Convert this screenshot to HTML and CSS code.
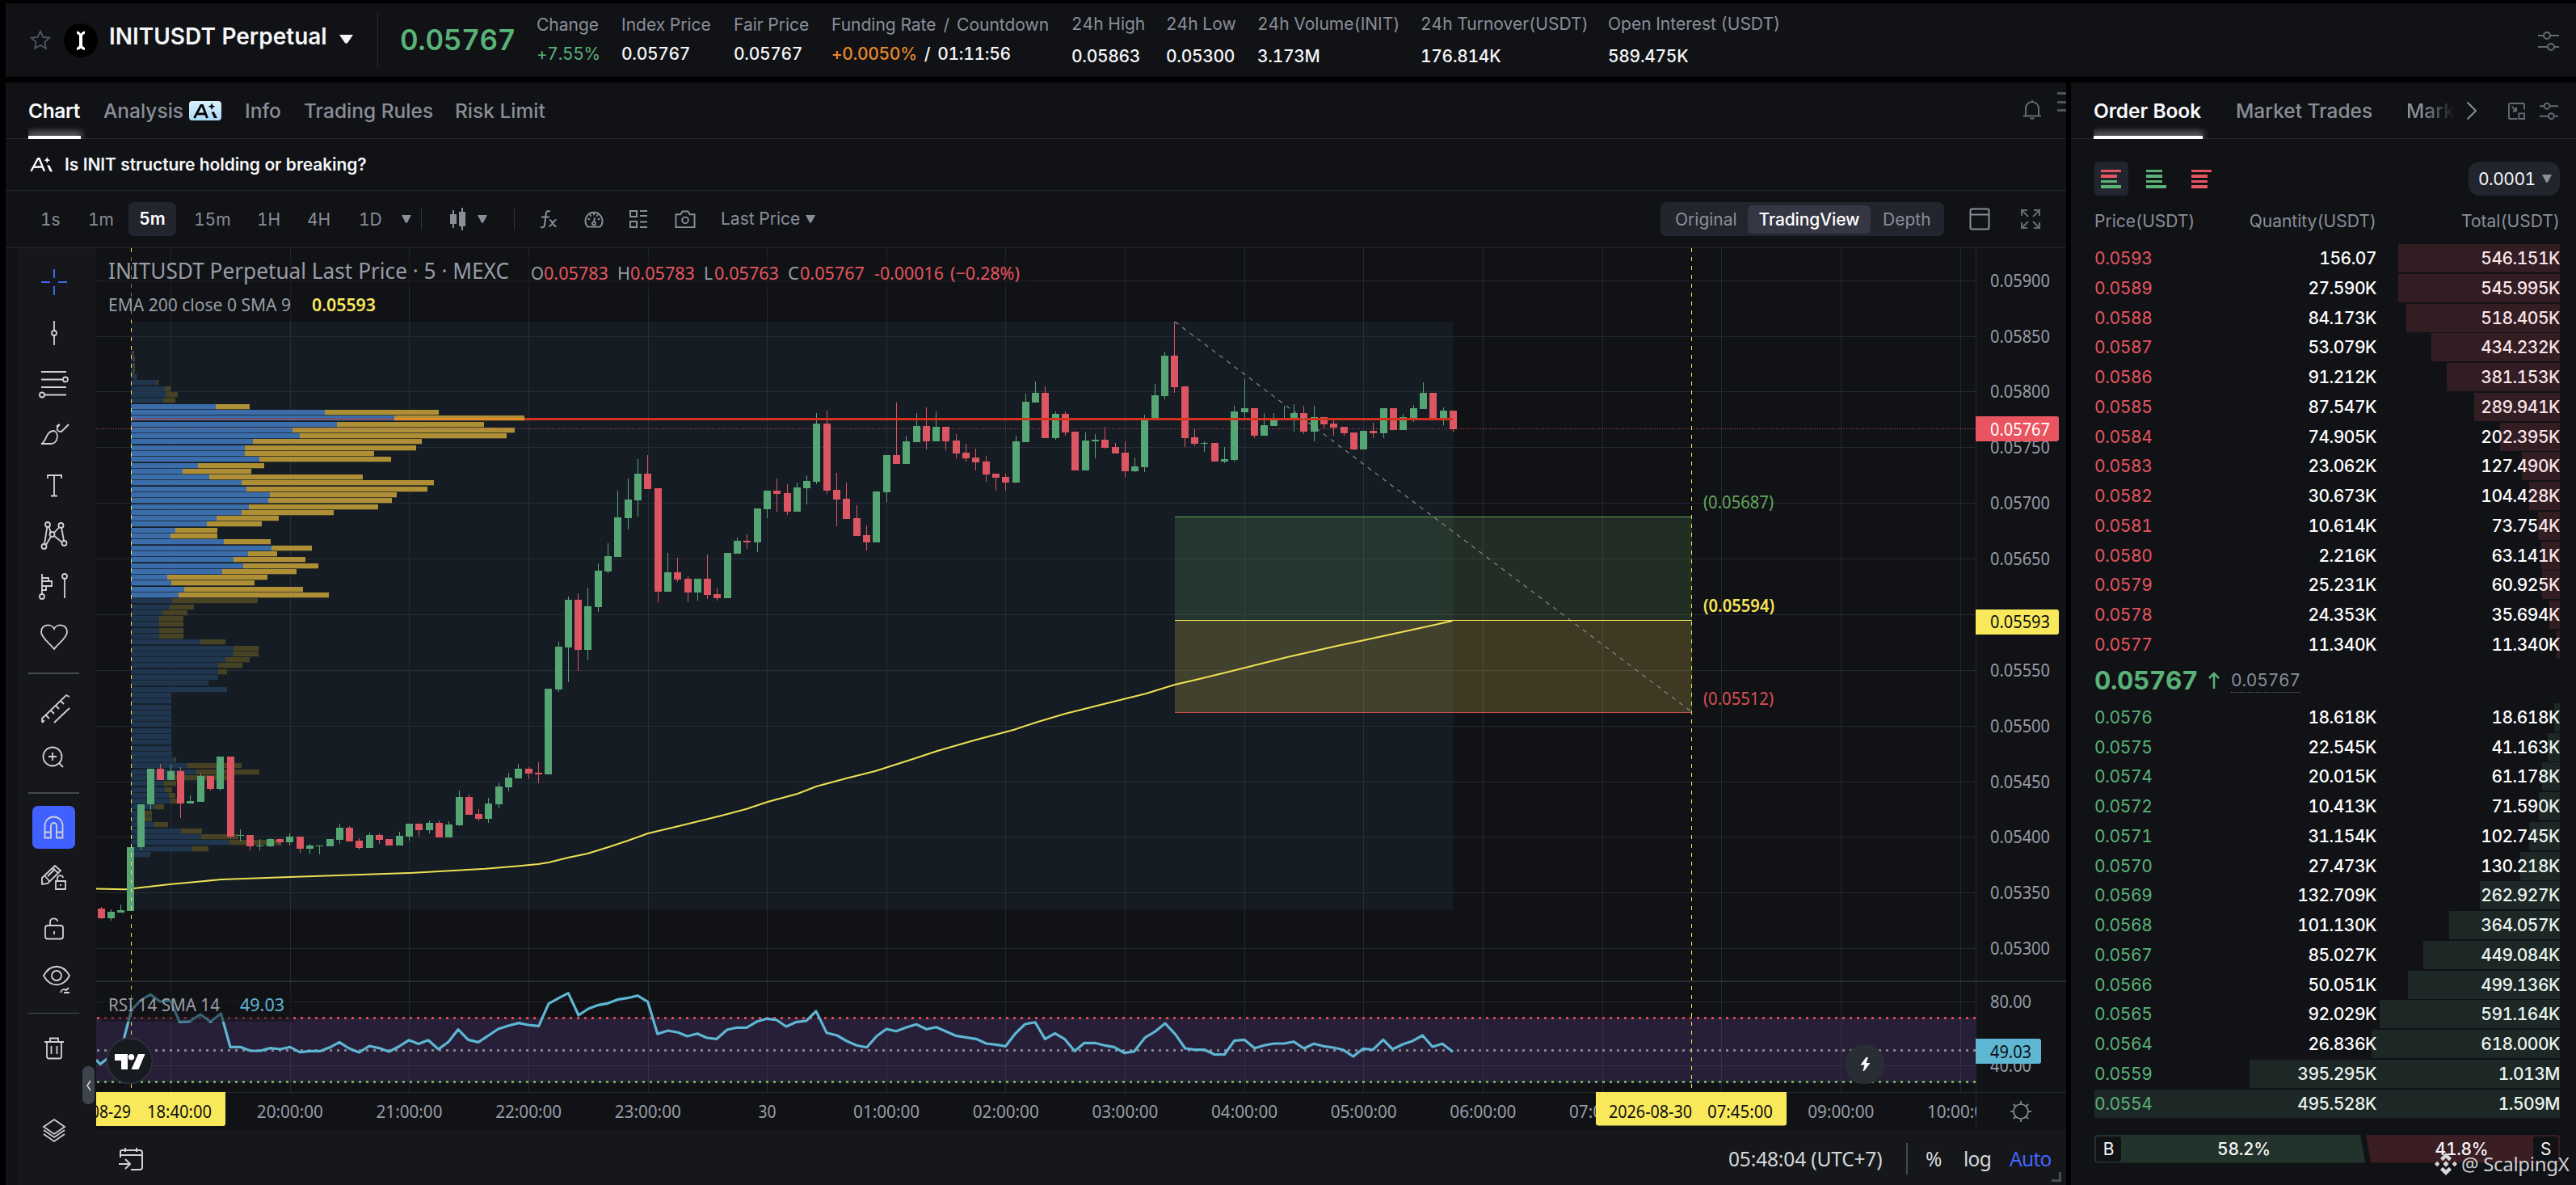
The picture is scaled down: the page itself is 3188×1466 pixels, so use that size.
FILE: index.html
```html
<!DOCTYPE html>
<html lang="en">
<head>
<meta charset="utf-8">
<title>INITUSDT Perpetual</title>
<link rel="stylesheet" href="styles.css">
</head>
<body>
<header class="topbar">
  <svg class="star" viewBox="0 0 26 26"><path d="M13 1.800l3.300 7 7.800 1-5.700 5.300 1.400 7.700-6.800-3.800-6.800 3.800 1.400-7.700L1.900 9.800l7.800-1z"/></svg>
  <svg class="coin" viewBox="0 0 42 42"><circle cx="21" cy="21" r="21" fill="#000"/><path d="M16 9.500c3 .5 4.200 1.700 5 3.500.8-1.800 2-3 5-3.500v3.200c-2 .5-3 1.600-3 3.600v10c0 2 1 3.100 3 3.600v3.200c-3-.5-4.200-1.200-5-2.500-.8 1.300-2 2-5 2.500v-3.200c2-.5 3-1.600 3-3.600v-10c0-2-1-3.100-3-3.600z" fill="#fff"/></svg>
  <h1 class="pair">INITUSDT Perpetual</h1>
  <span class="caret caret-lg"></span>
  <span class="vline"></span>
  <span class="last">0.05767</span>
  <dl class="stats">
    <div class="stat w-change"><dt>Change</dt><dd class="up">+7.55%</dd></div>
    <div class="stat w-index"><dt>Index Price</dt><dd>0.05767</dd></div>
    <div class="stat w-fair"><dt>Fair Price</dt><dd>0.05767</dd></div>
    <div class="stat w-fund"><dt>Funding Rate<span class="sl">/</span>Countdown</dt><dd><span class="orange">+0.0050%</span><span class="sl">/</span>01:11:56</dd></div>
    <div class="stat tall w-high"><dt>24h High</dt><dd>0.05863</dd></div>
    <div class="stat tall w-low"><dt>24h Low</dt><dd>0.05300</dd></div>
    <div class="stat tall w-vol"><dt>24h Volume(INIT)</dt><dd>3.173M</dd></div>
    <div class="stat tall w-turn"><dt>24h Turnover(USDT)</dt><dd>176.814K</dd></div>
    <div class="stat tall"><dt>Open Interest (USDT)</dt><dd>589.475K</dd></div>
  </dl>
  <svg class="ico sliders" viewBox="0 0 28 28"><path d="M1 7h7M16 7h11M1 21h12M21 21h6"/><circle cx="12" cy="7" r="4"/><circle cx="17" cy="21" r="4"/></svg>
</header>

<main class="main">
<section class="chart-panel">
  <nav class="tabs">
    <a class="tab active">Chart</a>
    <a class="tab t-analysis">Analysis<svg class="ai-badge" viewBox="0 0 40 24"><defs><linearGradient id="ab" x1="0" y1="0" x2="0" y2="1"><stop offset="0" stop-color="#d9f1fb"/><stop offset="1" stop-color="#abd9f7"/></linearGradient></defs><rect width="40" height="24" rx="4" fill="url(#ab)"/><path d="M6.500 21L14.800 5.500h1.700L22.500 21M10.500 16.200c4-.5 6.500-.5 9.500-.2" fill="none" stroke="#000" stroke-width="2.800"/><path d="M28 2.500l1.300 3 3 1.300-3 1.300-1.300 3-1.300-3-3-1.300 3-1.300zM27.500 13.500h3.500l3.800 7.500H31z" fill="#000"/></svg></a>
    <a class="tab t-info">Info</a>
    <a class="tab t-rules">Trading Rules</a>
    <a class="tab">Risk Limit</a>
    <svg class="ico bell" viewBox="0 0 24 26"><path d="M1 20.500h22M4 20V11a8 8 0 0 1 16 0v9M12 1v3M9.500 23.500h5" /></svg>
    <span class="burger"><i></i><i></i><i></i></span>
  </nav>
  <div class="ai-row">
    <svg class="ai-ico" viewBox="0 0 30 19"><path d="M1.500 18L10.300 2h1.700L18.500 18M5.500 13c4-.5 7-.5 10-.2" fill="none" stroke="#fff" stroke-width="2.400"/><path d="M22 0l1.200 2.800L26 4l-2.800 1.200L22 8l-1.200-2.800L18 4l2.800-1.200zM22 10.500h3.200l3.800 8h-3.300z" fill="#fff"/></svg>
    <span>Is INIT structure holding or breaking?</span>
  </div>
  <div class="toolbar">
    <span class="iv i1">1s</span><span class="iv i2">1m</span><span class="iv on">5m</span><span class="iv i4">15m</span><span class="iv i5">1H</span><span class="iv i6">4H</span><span class="iv i7">1D</span>
    <span class="caret c-iv"></span><span class="tdiv"></span>
    <svg class="t-candle" viewBox="0 0 22 28"><path d="M5 3v22M16 0v28" stroke="#898e99" stroke-width="2"/><path d="M1 8h8v12H1zM12 5h8v18h-8z" fill="#898e99"/></svg>
    <span class="caret c-ca"></span><span class="tdiv d2"></span>
    <svg class="ico t-fx" viewBox="0 0 24 24"><path d="M14 2.500C10 1 9 3 8.700 6L7 19c-.4 3-2 4-5 3M3 9.500h10M13 13c3 0 5 9 8.500 8M21.500 13c-3.500 0-6 8-9 8"/></svg>
    <svg class="ico t-ga" viewBox="0 0 26 24"><path d="M5 21.500A11 11 0 1 1 21 21.500zM13 3.500v3M5 11l3 1M21 11l-3 1M8 6l1.500 2M18 6l-1.500 2M14 9.500l-1 6"/><circle cx="13" cy="17" r="2"/></svg>
    <svg class="ico t-gr" viewBox="0 0 24 24"><path d="M2 2h8v7H2zM2 15h8v7H2zM14 2h9M14 8h9M14 15.500h9M14 22h9"/></svg>
    <svg class="ico t-cam" viewBox="0 0 28 24"><path d="M2 5.500h6l2.500-4h7l2.500 4h6v16.500H2z"/><circle cx="14" cy="13" r="4"/></svg>
    <span class="lp">Last Price</span><span class="caret c-lp"></span>
    <div class="seg"><span class="s1">Original</span><span class="s-on">TradingView</span><span class="s3">Depth</span></div>
    <svg class="ico t-win" viewBox="0 0 26 28"><rect x="1.500" y="1.500" width="23" height="25" rx="2"/><path d="M2 8.500h22"/></svg>
    <svg class="ico t-full" viewBox="0 0 26 26"><path d="M2 9V2h7M2 2l8 8M17 2h7v7M24 2l-8 8M2 17v7h7M2 24l8-8M24 17v7h-7M24 24l-8-8"/></svg>
  </div>
  <div class="tv">
    <aside class="tools">
      <svg class="tool blue" viewBox="-20 -20 40 40"><path d="M0-16V-5M0 5v11M-16 0H-5M5 0h11"/></svg>
      <svg class="tool" viewBox="-20 -20 40 40"><path d="M0-15V-3M0 3v12"/><circle r="3"/></svg>
      <svg class="tool" viewBox="-20 -20 40 40"><path d="M-16-14h31M-16-4.500h27M-16 5h31M-12 14.500h27"/><circle cx="14" cy="-4.500" r="3"/><circle cx="-15" cy="14.500" r="3"/></svg>
      <svg class="tool" viewBox="-20 -20 40 40"><path d="M-16 12C-9 10-11-4 0-4 7-1 4 12-4 12zM7-12c-6 6-3 9 2 9L18-12M6-12l-3 3"/></svg>
      <svg class="tool" viewBox="-20 -20 40 40"><path d="M-8-8v-4H9v4M0-12v25M-4 13.500h8"/></svg>
      <svg class="tool" viewBox="-20 -20 40 40"><path d="M-8.500-11l-3.500 22M-6.500-11L-4-2M0-3l6.500-7M9-10l3 17M0 1l10 8M-4 2l-6 10"/><circle cx="-8" cy="-13" r="3"/><circle cx="8.500" cy="-12" r="3"/><circle cx="-2.500" cy="-1" r="3"/><circle cx="12.500" cy="10" r="3"/><circle cx="-12.500" cy="14" r="3"/></svg>
      <svg class="tool" viewBox="-20 -20 40 40"><path d="M-15-15v26M13-9v24M-15-10h8v4h4v6h-7v5h-5M-7-6h-8M-3 0h-12"/><circle cx="-15" cy="13" r="3"/><circle cx="13" cy="-12" r="3"/></svg>
      <svg class="tool" viewBox="-20 -20 40 40"><path d="M0-9C-3-16-16-15-16-5-16 2-5 9 0 16 5 9 16 2 16-5 16-15 3-16 0-9z"/></svg>
      <hr class="h1">
      <svg class="tool" viewBox="-20 -20 40 40"><path d="M-15 16L-15 12 15-17 19-15M19-1L0 17M-10 8l4 4M-4 2l4 4M2-4l4 4M8-10l4 4M-15 17l3-3"/></svg>
      <svg class="tool" viewBox="-20 -20 40 40"><circle cx="-2" cy="-4" r="11.500"/><path d="M-7-4H3M-2-9V1M6 4l5 5"/></svg>
      <hr>
      <svg class="tool magnet" viewBox="-26.500 -26.500 53 53"><path d="M-11 13V-2a11 11 0 0 1 22 0v15H3.500V-2a3.500 3.500 0 0 0-7 0v15zM-11 6h7.500M3.500 6H11"/></svg>
      <svg class="tool" viewBox="-20 -20 40 40"><path d="M-15 0L1-15l7 6L-8 7l-7 1zM-12-3l6 7M-2-12l7 6M-8-2l9-9M2 4h12v10H2zM4 4V1c0-5 7-5 7-1M8 8v2"/></svg>
      <svg class="tool" viewBox="-20 -20 40 40"><rect x="-11" y="-4" width="22" height="16.500" rx="3"/><path d="M-5-4v-4c0-6 8-6 9.500-1M0 3v4"/></svg>
      <svg class="tool" viewBox="-20 -20 40 40"><path d="M-13-4C-5-19 11-19 19-4 11 11-5 11-13-4zM8 17c1-4 4-5 7-3l3-3M12 17h7"/><circle cx="3" cy="-4" r="6"/></svg>
      <hr class="thin">
      <svg class="tool" viewBox="-20 -20 40 40"><path d="M-12-8h24M-9-8v18a2.500 2.500 0 0 0 2.500 2.500h13A2.500 2.500 0 0 0 9 10V-8M-5-8v-4.500H5V-8M-3.500-3v10M3.500-3v10"/></svg>
      <svg class="tool last-tool" viewBox="-20 -20 40 40"><path d="M0-14l13 9L0 4l-13-9zM-13-1L0 8l13-9M-13 4L0 13l13-9"/></svg>
      <span class="collapse"><svg viewBox="0 0 8 14"><path d="M6 1L2 7l4 6"/></svg></span>
    </aside>
    <div class="tv-main">
      <svg id="chart" class="chart" viewBox="119 307 2438 1091"></svg>
      <footer class="tv-foot">
        <svg class="cal" viewBox="0 0 30 28"><path d="M2 12V5a2 2 0 0 1 2-2h22a3 3 0 0 1 3 3v18a3 3 0 0 1-3 3H15M2 9h27M8 0v5M22 0v5M0 20h13M8 14l6 6-6 6"/></svg>
        <span class="clock">05:48:04 (UTC+7)</span><span class="fdiv"></span><span class="pct">%</span><span class="log">log</span><span class="auto">Auto</span>
        <i class="grip"></i>
      </footer>
    </div>
  </div>
</section>

<section class="book">
  <nav class="tabs">
    <a class="tab active b1">Order Book</a><a class="tab b2">Market Trades</a><a class="tab b3">Mark</a>
    <svg class="ico b-ch" viewBox="0 0 14 24"><path d="M1.500 1.500L12 12 1.500 22.500"/></svg>
    <svg class="ico b-pop" viewBox="0 0 22 22"><path d="M21 9V3a2 2 0 0 0-2-2H3a2 2 0 0 0-2 2v16a2 2 0 0 0 2 2h9M5 5l5.500 6M10.500 6v5H6M14 14h7v7h-7z"/></svg>
    <svg class="ico b-sl" viewBox="0 0 26 24"><path d="M1 6h6M14 6h11M1 19h11M20 19h5"/><circle cx="10.500" cy="6" r="3.600"/><circle cx="16" cy="19" r="3.600"/></svg>
  </nav>
  <div class="modes">
    <span class="mode on"><i class="r l"></i><i class="r"></i><i class="g"></i><i class="g l"></i></span>
    <span class="mode"><i class="g"></i><i class="g"></i><i class="g"></i><i class="g l"></i></span>
    <span class="mode"><i class="r l"></i><i class="r"></i><i class="r"></i><i class="r"></i></span>
    <span class="tick">0.0001<span class="caret"></span></span>
  </div>
  <div class="cols"><span>Price(USDT)</span><span>Quantity(USDT)</span><span>Total(USDT)</span></div>
  <div class="rows asks">
    <div class="row"><b>0.0593</b><span>156.07</span><span>546.151K</span><i style="width:200px"></i></div>
    <div class="row"><b>0.0589</b><span>27.590K</span><span>545.995K</span><i style="width:200px"></i></div>
    <div class="row"><b>0.0588</b><span>84.173K</span><span>518.405K</span><i style="width:190px"></i></div>
    <div class="row"><b>0.0587</b><span>53.079K</span><span>434.232K</span><i style="width:159px"></i></div>
    <div class="row"><b>0.0586</b><span>91.212K</span><span>381.153K</span><i style="width:140px"></i></div>
    <div class="row"><b>0.0585</b><span>87.547K</span><span>289.941K</span><i style="width:106px"></i></div>
    <div class="row"><b>0.0584</b><span>74.905K</span><span>202.395K</span><i style="width:74px"></i></div>
    <div class="row"><b>0.0583</b><span>23.062K</span><span>127.490K</span><i style="width:47px"></i></div>
    <div class="row"><b>0.0582</b><span>30.673K</span><span>104.428K</span><i style="width:38px"></i></div>
    <div class="row"><b>0.0581</b><span>10.614K</span><span>73.754K</span><i style="width:27px"></i></div>
    <div class="row"><b>0.0580</b><span>2.216K</span><span>63.141K</span><i style="width:23px"></i></div>
    <div class="row"><b>0.0579</b><span>25.231K</span><span>60.925K</span><i style="width:22px"></i></div>
    <div class="row"><b>0.0578</b><span>24.353K</span><span>35.694K</span><i style="width:13px"></i></div>
    <div class="row"><b>0.0577</b><span>11.340K</span><span>11.340K</span><i style="width:4px"></i></div>
  </div>
  <div class="mid"><strong>0.05767</strong><svg viewBox="0 0 14 22"><path d="M7 21V2M1 8l6-6 6 6"/></svg><span>0.05767</span></div>
  <div class="rows bids">
    <div class="row"><b>0.0576</b><span>18.618K</span><span>18.618K</span><i style="width:7px"></i></div>
    <div class="row"><b>0.0575</b><span>22.545K</span><span>41.163K</span><i style="width:15px"></i></div>
    <div class="row"><b>0.0574</b><span>20.015K</span><span>61.178K</span><i style="width:22px"></i></div>
    <div class="row"><b>0.0572</b><span>10.413K</span><span>71.590K</span><i style="width:26px"></i></div>
    <div class="row"><b>0.0571</b><span>31.154K</span><span>102.745K</span><i style="width:38px"></i></div>
    <div class="row"><b>0.0570</b><span>27.473K</span><span>130.218K</span><i style="width:49px"></i></div>
    <div class="row"><b>0.0569</b><span>132.709K</span><span>262.927K</span><i style="width:99px"></i></div>
    <div class="row"><b>0.0568</b><span>101.130K</span><span>364.057K</span><i style="width:137px"></i></div>
    <div class="row"><b>0.0567</b><span>85.027K</span><span>449.084K</span><i style="width:169px"></i></div>
    <div class="row"><b>0.0566</b><span>50.051K</span><span>499.136K</span><i style="width:188px"></i></div>
    <div class="row"><b>0.0565</b><span>92.029K</span><span>591.164K</span><i style="width:223px"></i></div>
    <div class="row"><b>0.0564</b><span>26.836K</span><span>618.000K</span><i style="width:233px"></i></div>
    <div class="row"><b>0.0559</b><span>395.295K</span><span>1.013M</span><i style="width:384px"></i></div>
    <div class="row"><b>0.0554</b><span>495.528K</span><span>1.509M</span><i style="width:100%"></i></div>
  </div>
  <div class="ratio">
    <div class="buy"><em>B</em><span>58.2%</span></div>
    <div class="sell"><span>41.8%</span><em>S</em></div>
  </div>
  <div class="mark"><svg viewBox="0 0 28 28"><path d="M14 0l7 7-3.200 3.200L14 6.400l-3.800 3.800L7 7zM14 28l7-7-3.200-3.200L14 21.600l-3.800-3.800L7 21zM3.200 10.800L6.400 14l-3.200 3.200L0 14zM24.800 10.800L28 14l-3.200 3.200-3.200-3.200zM14 10.300l3.700 3.700-3.700 3.700-3.700-3.700z"/></svg>@ ScalpingX</div>
</section>
</main>
<script src="chart.js"></script>
</body>
</html>
```

FILE: styles.css
```css
* { box-sizing: border-box; }
body { margin: 0; width: 3188px; height: 1466px; background: #000; overflow: hidden; font-family: Inter, "Liberation Sans", sans-serif; font-size: 21px; font-variant-numeric: tabular-nums; color: #898e99; display: flex; flex-direction: column; padding: 4px 0 0 7px; gap: 7px; white-space: nowrap; }
h1, dl, dd, dt, hr { margin: 0; }
em, i, b { font-style: normal; font-weight: 400; }
svg { display: block; flex: none; overflow: visible; }
.ico { fill: none; stroke: #898e99; stroke-width: 2; }
.caret { display: block; flex: none; width: 12px; height: 10px; background: #898e99; clip-path: polygon(0 0, 100% 0, 60% 92%, 50% 100%, 40% 92%); }
.up { color: #5ab278; }

.topbar { height: 91px; flex: none; background: #111216; display: flex; align-items: center; padding: 0 20px 0 30px; }
.star { width: 26px; height: 26px; fill: none; stroke: #4d525c; stroke-width: 2; }
.coin { width: 42px; height: 42px; margin-left: 16px; }
.pair { margin-left: 14px; width: 270px; font-size: 28px; font-weight: 600; line-height: 34px; color: #f5f6f8; margin-bottom: 10px; letter-spacing: 0; }
.caret-lg { width: 17px; height: 11px; background: #f5f6f8; margin: 0 0 2px 15px; }
.vline { width: 1px; height: 70px; background: #26282f; margin-left: 30px; }
.last { margin-left: 27px; width: 169px; color: #5ab278; font-size: 35px; font-weight: 600; line-height: 42px; letter-spacing: -0.3px; padding-bottom: 1px; }
.stats { display: flex; flex: 1; height: 91px; }
.stat { padding-top: 14px; flex: none; }
.stat dt { line-height: 26px; height: 36px; }
.stat dd { line-height: 26px; color: #f5f6f8; font-weight: 500; letter-spacing: -0.3px; }
.stat dd.up { color: #5ab278; font-weight: 400; }
.stat.tall { padding-top: 12px; }
.stat.tall dt { height: 40px; padding-top: 1px; }
.stat.tall dd { padding-top: 1px; }
.sl { margin: 0 9px; }
.orange { color: #e8892b; }
.w-change { width: 105px; } .w-index { width: 139px; } .w-fair { width: 121px; } .w-fund { width: 297px; }
.w-high { width: 117px; } .w-low { width: 113px; } .w-vol { width: 202px; } .w-turn { width: 232px; }
.sliders { width: 28px; height: 28px; stroke: #666a74; margin-top: 3px; }

.main { flex: 1; display: flex; gap: 6px; min-height: 0; }
.chart-panel { width: 2550px; flex: none; background: #111216; display: flex; flex-direction: column; }
.tabs { height: 70px; flex: none; display: flex; border-bottom: 1px solid #26282f; padding-left: 28px; font-size: 24.500px; font-weight: 500; }
.tab { flex: none; line-height: 71px; height: 70px; display: flex; align-items: flex-start; }
.tab.active { color: #f9fafb; font-weight: 600; letter-spacing: -0.4px; width: 65px; margin-right: 28px; position: relative; }
.tab.active::after { content: ""; position: absolute; left: 0; right: 0; bottom: 0; height: 4px; background: #fff; box-shadow: 0 -3px 8px 1px rgba(255,255,255,.5); clip-path: inset(-14px -6px 0 0); }
.t-analysis { width: 175px; }
.ai-badge { width: 40px; height: 24px; margin: 23px 0 0 7px; }
.t-info { width: 73px; }
.t-rules { width: 187px; }
.bell { width: 24px; height: 26px; margin: 21px 0 0 auto; stroke: #666a74; }
.burger { width: 11px; margin: 12px 0 0 19px; display: flex; flex-direction: column; gap: 7.500px; }
.burger i { height: 3px; background: #4d525c; }
.ai-row { height: 64px; flex: none; border-bottom: 1px solid #26282f; display: flex; align-items: center; padding: 0 0 0 30px; color: #f5f6f8; font-weight: 600; letter-spacing: -0.100px; }
.ai-ico { width: 29px; height: 19px; margin-right: 14px; }
.toolbar { height: 71px; flex: none; border-bottom: 1px solid #26282f; display: flex; align-items: center; padding-left: 43px; }
.iv { flex: none; }
.i1 { width: 59px; } .i2 { width: 50px; } .i4 { width: 78px; } .i5 { width: 62px; } .i6 { width: 64px; } .i7 { width: 53px; }
.iv.on { width: 59px; height: 42px; border-radius: 7px; background: #23252e; color: #fff; font-weight: 600; text-align: center; line-height: 42px; margin-right: 22px; }
.tdiv { width: 1px; height: 28px; background: #30333b; margin-left: 12px; }
.t-candle { width: 22px; height: 28px; margin-left: 34px; }
.c-ca { margin-left: 13px; }
.d2 { margin-left: 33px; }
.t-fx { width: 24px; height: 24px; margin-left: 30px; }
.t-ga { width: 26px; height: 23px; margin-left: 31px; }
.t-gr { width: 24px; height: 24px; margin-left: 30px; }
.t-cam { width: 28px; height: 23px; margin-left: 32px; }
.lp { margin: 0 0 2px 30px; width: 105px; }
.seg { margin-left: auto; width: 351px; height: 42px; border-radius: 7px; background: #23252e; display: flex; align-items: center; }
.seg .s1 { width: 108px; padding-left: 18px; }
.seg .s-on { width: 152px; height: 35px; line-height: 35px; border-radius: 6px; background: #363744; color: #fff; text-align: center; font-weight: 500; letter-spacing: -0.1px; }
.seg .s3 { padding-left: 15px; }
.t-win { width: 26px; height: 28px; margin-left: 31px; }
.t-full { width: 26px; height: 26px; margin: 0 31px 0 37px; stroke: #666a74; }

.tv { flex: 1; display: flex; padding-left: 14px; min-height: 0; }
.tools { width: 98px; flex: none; background: #16171b; padding: 11px 7px 0 0; display: flex; flex-direction: column; align-items: center; position: relative; }
.tool { width: 40px; height: 40px; margin: 11.300px 0; fill: none; stroke: #cfd1d6; stroke-width: 1.800; }
.tool.blue { stroke: #3f66ef; stroke-width: 2; }
.tool.magnet { width: 53px; height: 53px; margin: 4.500px 0; background: #4060ff; border-radius: 7px; }
.tools hr { width: 63px; height: 2px; border: 0; background: #454952; margin: 9px 0 11px; flex: none; }
.tools hr.h1 { margin: 13px 0 12px; }
.tools hr.thin { height: 1px; margin: 10px 0 12px; }
.last-tool { margin-top: 51px; }
.collapse { position: absolute; right: 2px; top: 1012px; width: 15px; height: 47px; border-radius: 7px; background: #3d444d; display: flex; align-items: center; justify-content: center; }
.collapse svg { width: 8px; height: 14px; fill: none; stroke: #d5d7db; stroke-width: 1.500; }
.tv-main { width: 2438px; display: flex; flex-direction: column; }
.chart { width: 2438px; height: 1091px; overflow: hidden; }
.tv-foot { flex: 1; background: #16171b; display: flex; align-items: center; font-family: "Noto Sans", sans-serif; font-size: 24.500px; color: #d5d7db; position: relative; padding: 3px 0 0 28px; }
.cal { width: 30px; height: 28px; fill: none; stroke: #cfd1d6; stroke-width: 2; }
.clock { width: 220px; margin-left: auto; letter-spacing: -0.15px; }
.fdiv { width: 2px; height: 39px; background: #454952; }
.pct { width: 47px; margin-left: 22px; }
.log { width: 57px; letter-spacing: -0.7px; }
.auto { width: 70px; color: #4464ff; letter-spacing: -0.7px; }
.grip { position: absolute; right: 6px; bottom: 4px; width: 12px; height: 12px; border-right: 3px solid #4a4d55; border-bottom: 3px solid #4a4d55; }

.axis-t { font: 21px "Noto Sans", sans-serif; fill: #989ca6; }
.tag-t { font: 21px "Noto Sans", sans-serif; fill: #0f1014; }
.lg-title { font: 27px "Noto Sans", sans-serif; fill: #989ca6; }
.lg { font: 21.500px "Noto Sans", sans-serif; fill: #989ca6; }
.dn { fill: #e5555f; }
.bold { font-weight: 600; }

.book { flex: 1; background: #111216; padding-left: 29px; display: flex; flex-direction: column; position: relative; }
.book .tabs { margin-left: -29px; padding-left: 28px; }
.book .b1 { width: 135px; margin-right: 41px; letter-spacing: -0.1px; }
.b2 { width: 211px; }
.b3 { width: 60px; overflow: hidden; -webkit-mask-image: linear-gradient(90deg, #000 35%, transparent); mask-image: linear-gradient(90deg, #000 35%, transparent); }
.b-ch { width: 14px; height: 24px; margin: 23px 0 0 14px; }
.b-pop { width: 21px; height: 21px; margin: 25px 0 0 38px; stroke: #666a74; }
.b-sl { width: 25px; height: 24px; margin: 23px 0 0 17px; stroke: #666a74; }
.modes { margin-top: 28px; height: 42px; width: 576px; display: flex; gap: 14px; flex: none; }
.mode { width: 42px; height: 42px; border-radius: 5px; padding: 10px 0 0 8px; display: flex; flex-direction: column; gap: 3.300px; }
.mode.on { background: #23252e; }
.mode i { height: 3.200px; width: 20px; }
.mode i.l { width: 25px; }
.mode .r { background: #e5555f; }
.mode .g { background: #5ab278; }
.tick { margin-left: auto; width: 113px; height: 42px; border-radius: 14px; background: #23252e; color: #f5f6f8; line-height: 43px; padding-left: 12px; display: flex; justify-content: space-between; align-items: center; padding-right: 10px; letter-spacing: -0.5px; }
.cols { width: 576px; height: 60px; padding-top: 18px; flex: none; display: grid; grid-template-columns: 150px 199px 1fr; line-height: 28px; }
.cols span + span { text-align: right; }
.rows { width: 576px; flex: none; display: flex; flex-direction: column; gap: 1.750px; }
.row { height: 35px; line-height: 35px; display: grid; grid-template-columns: 150px 199px 1fr; position: relative; color: #fff; font-weight: 500; letter-spacing: -0.5px; }
.row span { text-align: right; }
.row b { letter-spacing: -0.35px; }
.row i { position: absolute; right: 0; top: 0; height: 35px; }
.asks b { color: #e5555f; }
.bids b { color: #5ab278; }
.asks i { background: rgba(223,88,104,.16); }
.bids i { background: rgba(105,180,140,.14); }
.mid { height: 55px; flex: none; display: flex; align-items: center; padding-bottom: 1px; }
.mid strong { color: #5ab278; font-size: 31.500px; font-weight: 700; width: 141px; letter-spacing: -0.4px; }
.mid svg { width: 14px; height: 22px; fill: none; stroke: #5ab278; stroke-width: 2.500; }
.mid span { margin-left: 14px; line-height: 29px; border-bottom: 1px dotted #6a6e78; letter-spacing: -0.2px; }
.ratio { margin-top: 21px; height: 35px; width: 576px; flex: none; display: flex; gap: 1px; color: #f5f6f8; font-weight: 500; line-height: 35px; letter-spacing: -0.3px; }
.ratio em { width: 31px; height: 31px; margin: 2px; border-radius: 3px; background: #111216; text-align: center; line-height: 31px; }
.ratio span { flex: 1; text-align: center; }
.buy { width: 335px; background: #22332b; display: flex; border-radius: 4px 0 0 4px; clip-path: polygon(0 0, 329px 0, 335px 100%, 0 100%); }
.sell { flex: 1; background: #3b1d24; display: flex; border-radius: 0 4px 4px 0; clip-path: polygon(0 0, 100% 0, 100% 100%, 6px 100%); padding-left: 32px; }
.mark { position: absolute; left: 450px; top: 1322px; display: flex; align-items: center; gap: 5px; color: #d0d1d3; font: 24px/32px "Noto Sans", sans-serif; letter-spacing: -0.3px; }
.mark svg { width: 28px; height: 28px; fill: #d8d8d8; }
```

FILE: chart.js
```js
const NS = 'http://www.w3.org/2000/svg';
const root = document.getElementById('chart');

function el(name, attrs, text) {
  const n = document.createElementNS(NS, name);
  for (const k in attrs) n.setAttribute(k, attrs[k]);
  if (text !== undefined) n.textContent = text;
  root.appendChild(n);
  return n;
}
const rect = (x, y, w, h, fill, extra) => el('rect', { x, y, width: w, height: h, fill, ...extra });
const line = (x1, y1, x2, y2, stroke, extra) => el('line', { x1, y1, x2, y2, stroke, ...extra });
const label = (x, y, w, text, cls, extra) =>
  el('text', { x, y, textLength: w, lengthAdjust: 'spacingAndGlyphs', class: cls, ...extra }, text);

const LEFT = 119, RIGHT = 2445, TOP = 307, BOTTOM = 1351;
const hourX = k => 211.2 + 147.65 * k;
const barX = i => 211.2 + 12.304 * i;
const UP = '#56a574', DOWN = '#dc5563', GRID = '#25282f', GRID_IN = '#272e38';

// volume profile range background
rect(162, 398, 1636.5, 727.5, '#151c23');

// grid, slightly brighter inside the profile range
const priceY = [347.5, 416.5, 484.5, 553.5, 622.5, 691.5, 760.5, 829.5, 898.5, 967.5, 1035.5, 1104.5, 1173.5];
for (let k = 0; k < 16; k++) {
  const x = Math.round(hourX(k) - .3) + .5;
  line(x, TOP, x, BOTTOM, GRID);
  if (x < 1798) line(x, 398, x, 1125.5, GRID_IN);
}
for (const y of priceY) {
  line(LEFT, y, RIGHT, y, GRID);
  if (y > 398 && y < 1125) line(162, y, 1798.5, y, GRID_IN);
}
line(LEFT, 1239.5, RIGHT, 1239.5, GRID);
rect(LEFT, 1259, RIGHT - LEFT, 80, '#261f37');
for (let k = 0; k < 16; k++) {
  const x = Math.round(hourX(k) - .3) + .5;
  line(x, 1259, x, 1339, '#353043');
}
line(LEFT, 1318.5, RIGHT, 1318.5, '#353043');

// fibonacci zones
rect(1454, 639, 640, 128, 'rgba(107,158,88,.2)');
rect(1454, 767, 640, 114, 'rgba(247,213,92,.2)');

// volume profile: [x where up volume ends, x where total ends]
const profile = [
  [164,166],[165,167],[165,167],[165,167],[168,169],[194,196],[204,211],[206,220],[202,217],
  [267,309],[402,543],[488,649],[417,599],[362,637],[371,627],[313,522],[303,515],[303,463],[321,484],[245,327],[226,311],
  [259,449],[299,537],[305,529],[334,491],[332,485],[308,468],[299,413],[268,345],[256,324],[217,269],[211,269],[277,335],
  [336,386],[307,343],[289,378],[301,394],[275,367],[207,331],[212,315],[228,375],[221,407],
  [213,319],[210,240],[201,232],[197,227],[197,227],[197,227],[197,227],[248,279],[289,320],[289,320],[279,309],[270,300],[270,281],
  [270,270],[258,258],[281,281],[212,212],[212,212],[212,212],[212,212],[212,212],[212,212],[212,212],[212,212],[212,212],[212,212],
  [213,213],[216,218],[232,299],[243,321],[215,286],[203,218],[204,213],[209,217],[211,221],[191,203],[172,188],[176,188],
  [191,208],[224,250],[249,295],[284,348],[237,258],[185,186]
];
profile.forEach(([a, b], i) => {
  const y = Math.round(434 + i * 7.292), bright = i >= 9 && i <= 41;
  rect(162, y, a - 162, 6.3, bright ? '#3a6daa' : '#20364f');
  if (b > a) rect(a, y, b - a, 6.3, bright ? '#ae8f35' : '#484225');
});

// last price level
line(LEFT, 530.5, RIGHT, 530.5, '#c24f5b', { 'stroke-dasharray': '1 2' });

// moving average
el('polyline', { fill: 'none', stroke: '#efe055', 'stroke-width': 2, points:
  '119,1099.500 155,1100.300 166,1099 210,1094 274,1088 358,1085 506,1080 601,1074.800 640,1071.500 666,1069 679,1067 703,1061 727,1056 753,1048 777,1040 802,1031 840,1022 893,1009 924,1000.700 950,992 987,982 1010,973 1047,963 1083,954 1133,938 1160,929 1206,915.700 1255,902.700 1282,893.700 1318,883 1379,867.700 1417.600,858.300 1454,847 1484,840 1517,832 1556,822.300 1596,812.300 1655,799 1687,792.300 1762,776 1797.500,768' });

// candles from bar -7: [up?, body top, body bottom, wick top, wick bottom]
const candles = [
  [0,1124,1136,1122,1137],[1,1128,1136,1125,1139],[1,1126,1129,1119,1129],[1,1048,1127,1048,1127],[1,995,1048,995,1051],[1,951,995,951,1002],[0,951,965,945,965],
  [1,954,965,946,965],[0,954,994,949,1012],[1,991,994,984,994],[1,960,992,957,992],[0,960,976,960,978],[1,936,976,936,978],[0,936,1035,936,1037],
  [1,1033,1034,1026,1041],[0,1033,1047,1033,1052],[1,1046,1047,1038,1052],[1,1038,1047,1037,1048],[0,1038,1042,1037,1046],[1,1035,1042,1031,1046],
  [0,1035,1050,1035,1055],[1,1046,1050,1044,1056],[1,1046,1047,1046,1057],[1,1038,1047,1038,1047],[1,1024,1039,1019,1044],[0,1024,1041,1022,1041],
  [0,1040,1049,1037,1051],[1,1033,1049,1030,1049],[0,1033,1039,1031,1044],[0,1038,1046,1038,1046],[1,1034,1046,1029,1046],[1,1019,1035,1019,1040],
  [0,1019,1027,1019,1035],[1,1018,1027,1015,1031],[0,1018,1036,1015,1036],[1,1020,1036,1016,1036],[1,986,1021,978,1022],[0,986,1008,983,1008],
  [0,1007,1013,1001,1016],[1,994,1013,987,1018],[1,973,995,969,1000],[1,962,974,956,979],[1,951,963,945,963],[0,951,957,949,964],[0,956,958,943,969],
  [1,852,958,852,958],[1,800,853,794,856],[1,742,801,738,844],[0,742,804,734,830],[1,750,804,727,816],[1,706,751,697,757],[1,688,707,672,709],
  [1,640,689,607,689],[1,618,641,592,655],[1,586,619,568,639],[0,586,605,563,605],[0,604,732,604,745],[1,708,732,684,732],[0,708,717,690,720],
  [0,716,733,713,745],[1,716,733,716,743],[0,716,736,686,741],[0,735,740,727,743],[1,684,740,684,740],[1,669,685,665,685],[0,669,671,661,679],
  [1,629,671,629,683],[1,607,630,607,641],[0,607,611,592,633],[0,610,633,599,637],[1,603,633,597,633],[1,595,604,588,624],[1,524,596,511,599],
  [0,524,607,508,611],[0,606,618,585,651],[0,617,642,597,642],[0,641,663,625,663],[0,662,671,650,681],[1,608,671,608,671],[1,563,609,563,621],
  [0,563,574,498,574],[1,546,574,539,574],[1,527,547,511,547],[0,527,546,504,556],[1,528,546,509,546],[0,528,546,528,557],[0,545,561,537,567],
  [0,560,567,549,571],[0,566,572,555,582],[0,571,587,564,596],[0,586,591,586,607],[0,590,597,586,607],[1,546,597,539,597],[1,497,547,487,547],
  [1,486,498,472,498],[0,486,542,478,542],[1,512,542,509,544],[0,512,535,509,539],[0,534,582,534,582],[1,545,582,535,582],[1,544,546,537,567],
  [0,544,554,528,555],[0,553,561,548,561],[0,560,583,546,590],[1,577,583,566,584],[1,519,578,513,584],[1,489,518,475,518],[1,440,490,435,494],
  [0,440,479,398,486],[0,478,542,478,553],[0,541,549,530,552],[1,548,549,546,559],[0,548,571,548,571],[1,568,571,553,573],[1,509,569,502,571],
  [1,505,510,469,518],[0,505,539,505,542],[1,526,539,511,539],[1,518,527,511,527],[1,518,519,502,519],[1,511,518,500,534],[0,511,534,502,537],
  [1,516,534,502,546],[0,516,525,516,530],[0,524,529,520,539],[0,528,536,528,539],[0,535,556,535,557],[1,533,556,533,556],[0,533,536,523,542],
  [1,505,536,505,542],[0,505,532,505,532],[1,516,532,512,532],[1,505,518,501,522],[1,486,506,473,506],[0,486,518,486,518],[1,508,518,504,526],[0,508,531,508,535]
];
candles.forEach(([up, bt, bb, wt, wb], n) => {
  const x = Math.round(barX(n - 7) - 4.5), c = up ? UP : DOWN;
  rect(x + 4, wt, 1, wb - wt, c);
  rect(x, bt, 9, Math.max(bb - bt, 1), c);
});

// point of control, translucent over the histogram
rect(162, 517, 326, 3, '#d5311f', { opacity: .35 });
rect(488, 517, 161, 3, '#e08a2c');
rect(649, 517, 1149, 3, '#d5311f');

// fibonacci lines
line(1454, 398, 2094, 881, '#858890', { 'stroke-dasharray': '5.5 6', 'stroke-width': 1.2 });
line(1454, 639.5, 2094, 639.5, '#5fa456');
line(1454, 767.5, 2094, 767.5, '#f5e558');
line(1454, 881.5, 2094, 881.5, '#c9514c');
label(2108, 629, 87, '(0.05687)', 'axis-t', { style: 'fill:#63a85a' });
label(2108, 757, 88, '(0.05594)', 'axis-t bold', { style: 'fill:#f5e558' });
label(2108, 871.5, 87, '(0.05512)', 'axis-t', { style: 'fill:#d9504f' });

// RSI levels and line
line(LEFT, 1259.5, RIGHT, 1259.5, '#d9484b', { 'stroke-width': 3, 'stroke-dasharray': '3 6', 'stroke-dashoffset': -1 });
line(LEFT, 1299.5, RIGHT, 1299.5, '#84848c', { 'stroke-width': 3, 'stroke-dasharray': '3 6', 'stroke-dashoffset': -1 });
line(LEFT, 1338.5, RIGHT, 1338.5, '#67b054', { 'stroke-width': 3, 'stroke-dasharray': '3 6', 'stroke-dashoffset': -1 });
el('polyline', { fill: 'none', stroke: '#5eb6d3', 'stroke-width': 3.2, 'stroke-linejoin': 'round', points:
  '119,1311 124,1316.500 131,1311 145,1300 153,1286.400 162.500,1250 174,1237.500 186,1230.300 198,1239 211,1238 222,1264 235,1263.500 248,1255 260.500,1264 273.500,1254 285,1295.300 297.500,1295.300 310,1300 322,1300 334.600,1296.600 347,1298 359,1295.300 371,1301.700 384,1300.400 396,1300.400 408,1295.800 420,1289.400 432,1297 444.500,1302 457,1294 469,1296.600 481.500,1301 494,1294.500 506,1286.800 518,1291.500 530,1286.800 542.500,1298 555,1289 567,1273.600 579.500,1286.400 592,1289.400 616.600,1273 629,1269 642,1265.600 654,1268 666.700,1269.300 679,1241.700 691.700,1234.700 703.300,1228.700 716,1256 728,1248 740.700,1243.300 752,1241.300 764,1236.700 776.700,1234.700 789,1231.700 801.700,1239.300 813.700,1279 826.700,1275 839,1277.300 850.700,1282 863,1278.700 875,1284 887,1285.300 899.700,1274 911.700,1271.300 924,1271.300 937,1263.700 948.700,1260.300 961,1261.700 973,1270 985.700,1264.300 997.700,1263 1010,1251 1023,1277.700 1036,1281 1048,1288 1060,1293.300 1072.700,1295.700 1085,1281.700 1097,1273 1109,1275.700 1121.700,1271 1134,1267.300 1146.700,1273.300 1158.700,1270.700 1182.700,1281.300 1208,1285.300 1220.600,1291 1232.800,1292.300 1244.600,1294.300 1256.800,1278.300 1268.600,1267 1281,1264.700 1293.400,1285.300 1305.600,1278.300 1317.800,1285.700 1330,1300.300 1342,1290.300 1354.900,1290.300 1367,1293.300 1378.900,1295.300 1391.500,1302.700 1403.700,1300.700 1417,1283.700 1429.800,1276 1442,1266 1454.600,1279.700 1466.800,1297 1478.600,1298.700 1491,1298.700 1503.400,1304.700 1515.600,1304.300 1527.800,1287.300 1540,1286.300 1552.700,1296.700 1564.500,1293.300 1576.700,1291 1589,1291 1601,1288.700 1613.700,1297 1626,1291.300 1638,1294.300 1650.300,1296 1662,1298.700 1674.700,1307 1687,1297.300 1699,1298.700 1711.800,1286.300 1723.500,1298 1736.600,1291.700 1748.400,1287.700 1760.600,1281 1772.800,1295 1785,1291.300 1798,1301.300' });

// vertical time markers
for (const x of [162.5, 2093.5]) line(x, TOP, x, BOTTOM, '#f5e558', { 'stroke-dasharray': '5 6' });

// legend backdrops
rect(126, 315, 1145, 43, '#111216', { opacity: .5 });
rect(126, 358, 350, 38, '#111216', { opacity: .5 });
rect(126, 1223, 237, 41, '#111216', { opacity: .5 });
label(134, 345, 496, 'INITUSDT Perpetual Last Price · 5 · MEXC', 'lg-title');
[['O', 657, 16, '0.05783', 673], ['H', 764, 16, '0.05783', 780], ['L', 871, 11, '0.05763', 884], ['C', 975, 14, '0.05767', 990]].forEach(([k, x, w, v, vx]) => {
  label(x, 345.5, w, k, 'lg');
  label(vx, 345.5, 80, v, 'lg dn');
});
label(1082, 345.5, 86, '-0.00016', 'lg dn');
label(1176, 345.5, 86, '(−0.28%)', 'lg dn');
label(134, 385, 226, 'EMA 200 close 0 SMA 9', 'lg');
label(386, 385, 79, '0.05593', 'lg bold', { style: 'fill:#f9e95a' });
label(134, 1251, 138, 'RSI 14 SMA 14', 'lg');
label(297, 1251, 55, '49.03', 'lg', { style: 'fill:#5eb6d3' });

// pane borders
rect(LEFT, 1213, 2438, 2, '#2a2c33');
line(RIGHT + .5, TOP, RIGHT + .5, 1398, '#24272f');
line(LEFT, 1351.5, 2557, 1351.5, '#24272f');

// price axis
const prices = ['0.05900', '0.05850', '0.05800', '0.05750', '0.05700', '0.05650', '', '0.05550', '0.05500', '0.05450', '0.05400', '0.05350', '0.05300'];
prices.forEach((p, i) => { if (p) label(2463, priceY[i] + 7.5, 74, p, 'axis-t'); });
label(2463, 1247, 51, '80.00', 'axis-t');
label(2463, 1326, 51, '40.00', 'axis-t');
el('path', { d: 'M2445 515h100a3 3 0 0 1 3 3v25a3 3 0 0 1-3 3h-100z', fill: '#e95461' });
label(2463, 538.5, 74, '0.05767', 'tag-t', { style: 'fill:#fff' });
el('path', { d: 'M2445 754h100a3 3 0 0 1 3 3v25a3 3 0 0 1-3 3h-100z', fill: '#f9e95a' });
label(2463, 777, 74, '0.05593', 'tag-t');
el('path', { d: 'M2445 1285h78a3 3 0 0 1 3 3v25a3 3 0 0 1-3 3h-78z', fill: '#5eb6d3' });
label(2463, 1308.5, 51, '49.03', 'tag-t');

// time axis
const times = ['', '20:00:00', '21:00:00', '22:00:00', '23:00:00', '30', '01:00:00', '02:00:00', '03:00:00', '04:00:00', '05:00:00', '06:00:00', '07:00:00', '', '09:00:00', '10:00:00'];
times.forEach((t, k) => {
  if (!t) return;
  const w = t.length > 2 ? 82 : 22;
  label(hourX(k) - w / 2, 1383, w, t, 'axis-t');
});
rect(2446, 1353, 111, 45, '#111216');
el('path', { d: 'M119 1351h160v39a3 3 0 0 1-3 3H119z', fill: '#f9e95a' });
label(62, 1383, 100, '2026-08-29', 'tag-t');
label(182, 1383, 80, '18:40:00', 'tag-t');
el('path', { d: 'M1975 1351h236v38.500a3 3 0 0 1-3 3h-230a3 3 0 0 1-3-3z', fill: '#f9e95a' });
label(1991, 1383, 103, '2026-08-30', 'tag-t');
label(2113, 1383, 81, '07:45:00', 'tag-t');

// axis settings gear
el('circle', { cx: 2501, cy: 1375, r: 9, fill: 'none', stroke: '#898e99', 'stroke-width': 1.7 });
for (let a = 0; a < 8; a++) {
  const c = Math.cos(a * Math.PI / 4), s = Math.sin(a * Math.PI / 4);
  line(2501 + 9 * c, 1375 + 9 * s, 2501 + 13 * c, 1375 + 13 * s, '#898e99', { 'stroke-width': 1.7 });
}

// TradingView logo and quick action
el('circle', { cx: 160.5, cy: 1312.5, r: 28, fill: '#171b20', stroke: '#2f2e3d', 'stroke-width': 2 });
el('path', { d: 'M142 1304h16v19h-8v-11h-8z', fill: '#fff' });
el('circle', { cx: 162.5, cy: 1307.7, r: 3.7, fill: '#fff' });
el('path', { d: 'M171 1304h8.500l-8 19h-9z', fill: '#fff' });
el('circle', { cx: 2308, cy: 1316.5, r: 24.5, fill: '#292e34' });
el('path', { d: 'M2309.500 1308l-7 9.500h5l-2 7.500h1.500l7.500-10h-5l2.500-7z', fill: '#fff' });
```
